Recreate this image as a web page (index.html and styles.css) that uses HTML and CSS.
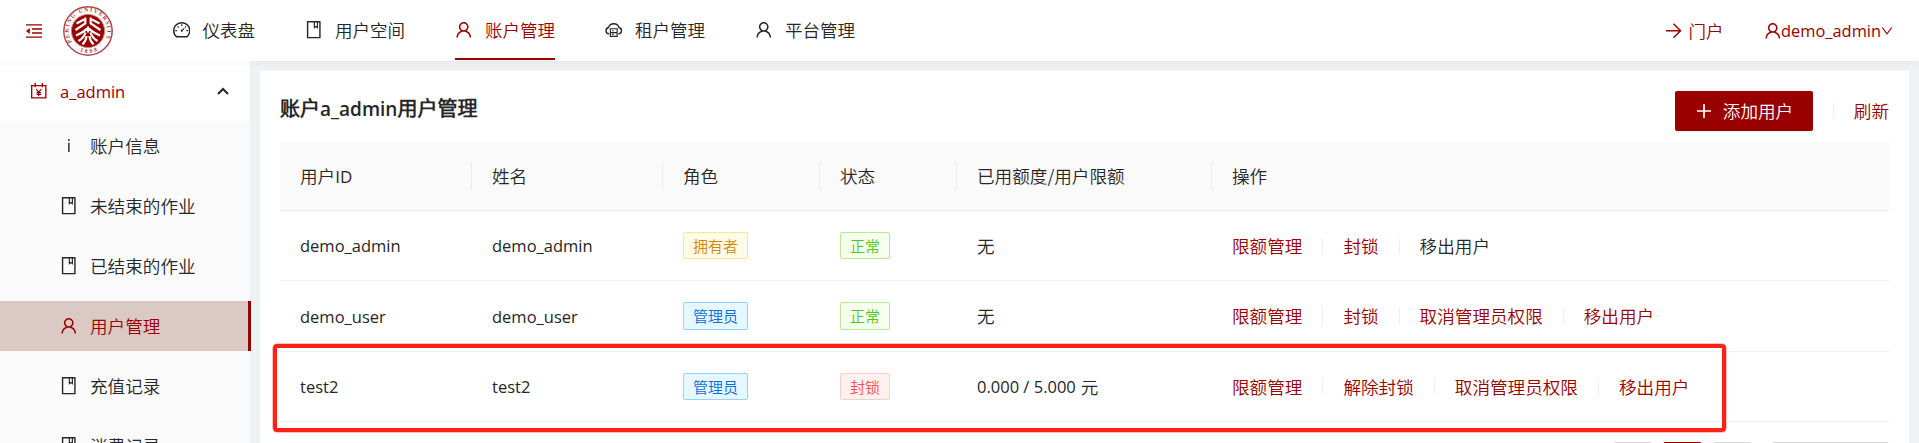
FILE: index.html
```html
<!DOCTYPE html>
<html lang="zh-CN">
<head>
<meta charset="utf-8">
<title>用户管理</title>
<link rel="stylesheet" href="styles.css">
</head>
<body>
<svg class="defs" aria-hidden="true">
  <symbol id="user" viewBox="64 64 896 896"><path d="M858.5 763.6a374 374 0 00-80.6-119.5 375.63 375.63 0 00-119.5-80.6c-.4-.2-.8-.3-1.2-.5C719.5 518 760 444.7 760 362c0-137-111-248-248-248S264 225 264 362c0 82.7 40.5 156 102.8 201.1-.4.2-.8.3-1.2.5-44.8 18.9-85 46-119.5 80.6a375.63 375.63 0 00-80.6 119.5A371.7 371.7 0 00136 901.8a8 8 0 008 8.2h60c4.4 0 7.9-3.5 8-7.8 2-77.2 33-149.5 87.8-204.3 56.7-56.7 132-87.9 212.2-87.9s155.5 31.2 212.2 87.9C779 752.7 810 825 812 902.2c.1 4.4 3.6 7.8 8 7.8h60a8 8 0 008-8.2c-1-47.8-10.9-94.3-29.5-138.2zM512 534c-45.9 0-89.1-17.9-121.6-50.4S340 407.9 340 362c0-45.9 17.9-89.1 50.4-121.6S466.1 190 512 190s89.1 17.9 121.6 50.4S684 316.1 684 362c0 45.9-17.9 89.1-50.4 121.6S557.9 534 512 534z"/></symbol>
  <symbol id="book" viewBox="64 64 896 896"><path d="M832 64H192c-17.7 0-32 14.3-32 32v832c0 17.7 14.3 32 32 32h640c17.7 0 32-14.3 32-32V96c0-17.7-14.3-32-32-32zm-260 72h96v209.9L621.5 312 572 347.4V136zm220 752H232V136h280v296.9c0 3.3 1 6.6 3 9.3a15.9 15.9 0 0022.3 3.7l83.8-59.9 81.4 59.4c2.7 2 6 3.1 9.4 3.1 8.8 0 16-7.2 16-16V136h64v752z"/></symbol>
  <symbol id="dashboard" viewBox="64 64 896 896"><path d="M924.8 385.6a446.7 446.7 0 00-96-142.4 446.7 446.7 0 00-142.4-96C631.1 123.8 572.5 112 512 112s-119.1 11.8-174.4 35.2a446.7 446.7 0 00-142.4 96 446.7 446.7 0 00-96 142.4C75.8 440.9 64 499.5 64 560c0 132.7 58.3 257.7 159.9 343.1l1.7 1.4c5.8 4.8 13.1 7.5 20.6 7.5h531.7c7.5 0 14.8-2.7 20.6-7.5l1.7-1.4C901.7 817.7 960 692.7 960 560c0-60.5-11.9-119.1-35.2-174.4zM761.4 836H262.6A371.12 371.12 0 01140 560c0-99.4 38.7-192.8 109-263 70.3-70.3 163.7-109 263-109 99.4 0 192.8 38.7 263 109 70.3 70.3 109 163.7 109 263 0 105.6-44.5 205.5-122.6 276z"/><path d="M623.5 421.5a8.03 8.03 0 00-11.3 0L527.7 506c-18.7-5-39.4-.2-54.1 14.5a55.95 55.95 0 000 79.2 55.95 55.95 0 0079.2 0 55.87 55.87 0 0014.5-54.1l84.5-84.5c3.1-3.1 3.1-8.2 0-11.3z"/><path d="M482 224h60v96h-60zM750 530h96v60h-96zM178 530h96v60h-96zM272 362l42-42 58 58-42 42zM752 362l-42-42-58 58 42 42z"/></symbol>
  <symbol id="cloud" viewBox="0 0 18 18"><path d="M4.300 13.200C2.400 13 1 11.700 1 9.900c0-1.600 1.100-2.800 2.600-3.200C4.400 4.200 6.500 2.800 9 2.800s4.600 1.400 5.400 3.900c1.500.4 2.600 1.600 2.600 3.200 0 1.800-1.400 3.100-3.300 3.300" fill="none" stroke="currentColor" stroke-width="1.400"/><path d="M5.500 8h7v7.800h-7zM5.500 11.900h7M7.300 10h1.600M7.300 13.800h1.600" fill="none" stroke="currentColor" stroke-width="1.200"/></symbol>
  <symbol id="account" viewBox="0 0 18 18"><path d="M1.700 3.700h14.600v12.600H1.700zM5.300 1v4.500M12.700 1v4.500" fill="none" stroke="currentColor" stroke-width="1.400"/><path d="M6.300 7.200L9 10.500l2.700-3.300M9 10.300v4.300M6.700 10.900h4.600M6.700 12.800h4.600" fill="none" stroke="currentColor" stroke-width="1.200"/></symbol>
  <symbol id="fold" viewBox="0 0 16 14"><path d="M0 .9h16M6 5h10M6 9h10M0 13.100h16" fill="none" stroke="currentColor" stroke-width="1.400"/><path d="M0 7l3.800-3v6z"/></symbol>
  <symbol id="info" viewBox="0 0 18 18"><path d="M8.200 6h1.800v9.500H8.200zM8.200 2h1.800v2H8.200z" opacity=".85"/></symbol>
  <symbol id="arrow" viewBox="0 0 18 18"><path d="M1 9h14.500M8.700 1.700L16 9l-7.300 7.300" fill="none" stroke="currentColor" stroke-width="1.500"/></symbol>
  <symbol id="plus" viewBox="0 0 16 16"><path d="M8 1v14M1 8h14" fill="none" stroke="currentColor" stroke-width="1.700"/></symbol>
</svg>

<header class="topbar">
  <svg class="fold"><use href="#fold"/></svg>
  <svg class="logo" viewBox="0 0 50 50">
    <defs>
      <path id="ring" d="M10.200 37.500A19.400 19.400 0 1 1 39.800 37.500"/>
      <path id="foot" d="M10 41A22 22 0 0 0 40 41"/>
    </defs>
    <circle cx="25" cy="25" r="24.200" class="logo-rim"/>
    <circle cx="25" cy="25" r="16.600" class="logo-core"/>
    <text class="logo-text"><textPath href="#ring" startOffset="2" textLength="80">PEKING UNIVERSITY</textPath></text>
    <text class="logo-text"><textPath href="#foot" startOffset="8" textLength="18">1898</textPath></text>
    <path class="logo-mark" d="M22.300 11.500v6L12.500 24M27.700 11.500v6l9.800 6.500M13.500 17.500l7.500-4M36.500 17.500l-7.500-4M25 20.500v6M25 21.500c-3 3.500-7 6-12 8M25 21.500c3 3.500 7 6 12 8M22.500 26.500c-1 3.500-3 6-7 8.500M27.500 26.500c1 3.500 3 6 7 8.500M23.500 30c-.2 3.500-1.500 6-4 8.500M26.500 30c.2 3.500 1.500 6 4 8.500"/>
  </svg>
  <nav class="nav">
    <a class="nav-item"><svg class="icon"><use href="#dashboard"/></svg>仪表盘</a>
    <a class="nav-item"><svg class="icon"><use href="#book"/></svg>用户空间</a>
    <a class="nav-item nav-active"><svg class="icon"><use href="#user"/></svg>账户管理</a>
    <a class="nav-item"><svg class="icon"><use href="#cloud"/></svg>租户管理</a>
    <a class="nav-item"><svg class="icon"><use href="#user"/></svg>平台管理</a>
  </nav>
  <a class="portal"><svg class="icon"><use href="#arrow"/></svg>门户</a>
  <a class="profile"><svg class="icon"><use href="#user"/></svg><span class="latin">demo_admin</span><svg class="caret" viewBox="0 0 12 12"><path d="M1.200 2.500L6 8.800l4.800-6.300"/></svg></a>
</header>

<div class="body">
  <aside class="sidebar">
    <div class="group"><svg class="icon"><use href="#account"/></svg><span class="latin">a_admin</span><svg class="chevron" viewBox="0 0 12 8"><path d="M1 7l5-5 5 5"/></svg></div>
    <a class="side-item"><svg class="icon"><use href="#info"/></svg>账户信息</a>
    <a class="side-item"><svg class="icon"><use href="#book"/></svg>未结束的作业</a>
    <a class="side-item"><svg class="icon"><use href="#book"/></svg>已结束的作业</a>
    <a class="side-item side-active"><svg class="icon"><use href="#user"/></svg>用户管理</a>
    <a class="side-item"><svg class="icon"><use href="#book"/></svg>充值记录</a>
    <a class="side-item"><svg class="icon"><use href="#book"/></svg>消费记录</a>
  </aside>

  <main class="card">
    <div class="card-head">
      <h1 class="title">账户<span class="title-latin">a_admin</span>用户管理</h1>
      <button class="add"><svg class="plus"><use href="#plus"/></svg>添加用户</button>
      <span class="divider"></span>
      <a class="link">刷新</a>
    </div>
    <div class="table">
      <div class="row head">
        <div class="cell">用户<span class="latin strong">ID</span></div>
        <div class="cell">姓名</div>
        <div class="cell">角色</div>
        <div class="cell">状态</div>
        <div class="cell">已用额度/用户限额</div>
        <div class="cell">操作</div>
      </div>
      <div class="row">
        <div class="cell"><span class="latin">demo_admin</span></div>
        <div class="cell"><span class="latin">demo_admin</span></div>
        <div class="cell"><span class="tag gold">拥有者</span></div>
        <div class="cell"><span class="tag green">正常</span></div>
        <div class="cell">无</div>
        <div class="cell actions"><a class="link">限额管理</a><span class="divider"></span><a class="link">封锁</a><span class="divider"></span><span>移出用户</span></div>
      </div>
      <div class="row tall">
        <div class="cell"><span class="latin">demo_user</span></div>
        <div class="cell"><span class="latin">demo_user</span></div>
        <div class="cell"><span class="tag blue">管理员</span></div>
        <div class="cell"><span class="tag green">正常</span></div>
        <div class="cell">无</div>
        <div class="cell actions"><a class="link">限额管理</a><span class="divider"></span><a class="link">封锁</a><span class="divider"></span><a class="link">取消管理员权限</a><span class="divider"></span><a class="link">移出用户</a></div>
      </div>
      <div class="row">
        <div class="cell"><span class="latin">test2</span></div>
        <div class="cell"><span class="latin">test2</span></div>
        <div class="cell"><span class="tag blue">管理员</span></div>
        <div class="cell"><span class="tag red">封锁</span></div>
        <div class="cell"><span class="latin amount">0.000 / 5.000</span>元</div>
        <div class="cell actions"><a class="link">限额管理</a><span class="divider"></span><a class="link">解除封锁</a><span class="divider"></span><a class="link">取消管理员权限</a><span class="divider"></span><a class="link">移出用户</a></div>
        <div class="highlight"></div>
      </div>
    </div>
    <div class="pager">
      <span class="page"></span><span class="page page-active"></span><span class="page"></span><span class="page-size"></span>
    </div>
  </main>
</div>
</body>
</html>
```
FILE: styles.css
```css
* { box-sizing: border-box; }
body {
  margin: 0;
  height: 443px;
  overflow: hidden;
  background: #f0f1f5;
  color: #262626;
  font: 350 17.6px/28px "Noto Sans CJK SC DemiLight", "Noto Sans CJK SC", sans-serif;
}
svg { display: block; fill: currentColor; flex: none; }
.defs { position: absolute; width: 0; height: 0; }
.icon { width: 17.5px; height: 17.5px; }
.latin { padding-top: 1px; font-family: "Open Sans", sans-serif; font-size: 16.500px; font-weight: 370; }
.strong { font-weight: 500; font-size: 17px; }
.link { color: #990000; }

.topbar {
  position: relative;
  z-index: 1;
  display: flex;
  align-items: center;
  height: 61px;
  padding: 0 26px;
  background: #fff;
  box-shadow: 0 2px 8px rgba(0, 0, 0, 0.04);
}
.fold { width: 16px; height: 14px; color: #990000; }
.logo { width: 50px; height: 50px; margin-left: 21px; }
.logo-rim { fill: #fff; stroke: #b04446; stroke-width: 1.4; }
.logo-core { fill: #990000; stroke: #c98284; stroke-width: 1; }
.logo-text { fill: #b04446; font: 700 5.8px "Liberation Serif", serif; }
.logo-mark { fill: none; stroke: #fff; stroke-width: 2.2; }
.nav { display: flex; flex: 1; gap: 50px; margin-left: 59.5px; }
.nav-item { display: flex; align-items: center; gap: 12.5px; height: 61px; border-bottom: 2px solid transparent; padding-top: 1px; font-size: 17.5px; }
.nav-active { height: 60px; padding-top: 2px; color: #990000; border-color: #990000; }
.portal { display: flex; align-items: center; gap: 6px; color: #990000; margin-right: 40px; font-size: 17.5px; }
.profile { display: flex; align-items: center; color: #990000; }
.profile .latin { font-size: 16.4px; }
.caret { width: 12px; height: 12px; }
.caret path, .chevron path { fill: none; stroke: currentColor; stroke-width: 1.2; }

.body { display: flex; height: 382px; }
.sidebar { width: 250px; height: 382px; background: #fafafa; flex: none; }
.group { display: flex; align-items: center; height: 60px; padding: 0 21px 0 30px; background: #fff; color: #990000; }
.group .latin { flex: 1; margin-left: 12.5px; }
.chevron { width: 12px; height: 8px; color: #262626; }
.chevron path { stroke-width: 2; }
.side-item { display: flex; align-items: center; gap: 12.5px; height: 50px; margin-bottom: 10px; padding-left: 60px; }
.side-active { margin-right: -1px; color: #990000; background: #dbc9c5; border-right: 3px solid #990000; }

.card { flex: 1; margin: 10px 10px 0; padding: 20px 20px 0; background: #fff; }
.card-head { display: flex; align-items: center; height: 51px; padding-bottom: 11px; }
.title { flex: 1; margin: 0; padding-bottom: 6px; font-size: 20px; font-weight: 700; }
.title-latin { font-family: "Open Sans", sans-serif; font-size: 19px; font-weight: 650; }
.add {
  display: flex; align-items: center; gap: 11px; width: 138px; height: 40px; padding: 0 0 0 21px;
  border: 0; border-radius: 2px; background: #990000; color: #fff; font: inherit;
  box-shadow: 0 2px 0 rgba(0, 0, 0, 0.04);
}
.plus { width: 16px; height: 16px; }
.divider { width: 1px; height: 16px; margin: 0 20px; background: #efefef; }
.actions { font-size: 17.6px; }

.row {
  position: relative;
  display: grid;
  grid-template-columns: 192px 191px 157px 137px 255px 1fr;
  align-items: center;
  height: 70px;
  border-bottom: 1px solid #efefef;
}
.tall { height: 71px; }
.head { height: 69px; background: #fafafa; }
.cell { display: flex; align-items: center; padding-left: 20px; height: 28px; white-space: nowrap; }
.head .cell:not(:last-child) { border-right: 1px solid #ebebeb; }
.amount { margin-right: 5px; }
.tag { height: 27px; padding: 0 9px; border: 1px solid; border-radius: 2px; font-size: 15px; line-height: 25px; }
.tall .tag { height: 28px; }
.gold { color: #d48806; background: #fffbe6; border-color: #ffe58f; }
.blue { color: #096dd9; background: #e6f7ff; border-color: #91d5ff; }
.green { color: #52c41a; background: #f6ffed; border-color: #b7eb8f; }
.red { color: #ff4d4f; background: #fff1f0; border-color: #ffccc7; }

/* Frame drawn over the table around the blocked user */
.highlight {
  position: absolute;
  left: -7px;
  top: -8px;
  width: 1453px;
  height: 88px;
  border: 4px solid #ff2212;
  box-shadow: 0 0 0 0.5px #ff8a80;
  border-radius: 4px;
}

.pager { display: flex; justify-content: flex-end; gap: 11px; padding-top: 20px; }
.page { width: 39px; height: 40px; border: 1px solid #d9d9d9; border-radius: 2px; }
.page-active { border-color: #990000; }
.page-size { width: 117px; height: 40px; margin-left: 9px; border: 1px solid #d9d9d9; border-radius: 2px; }
```
